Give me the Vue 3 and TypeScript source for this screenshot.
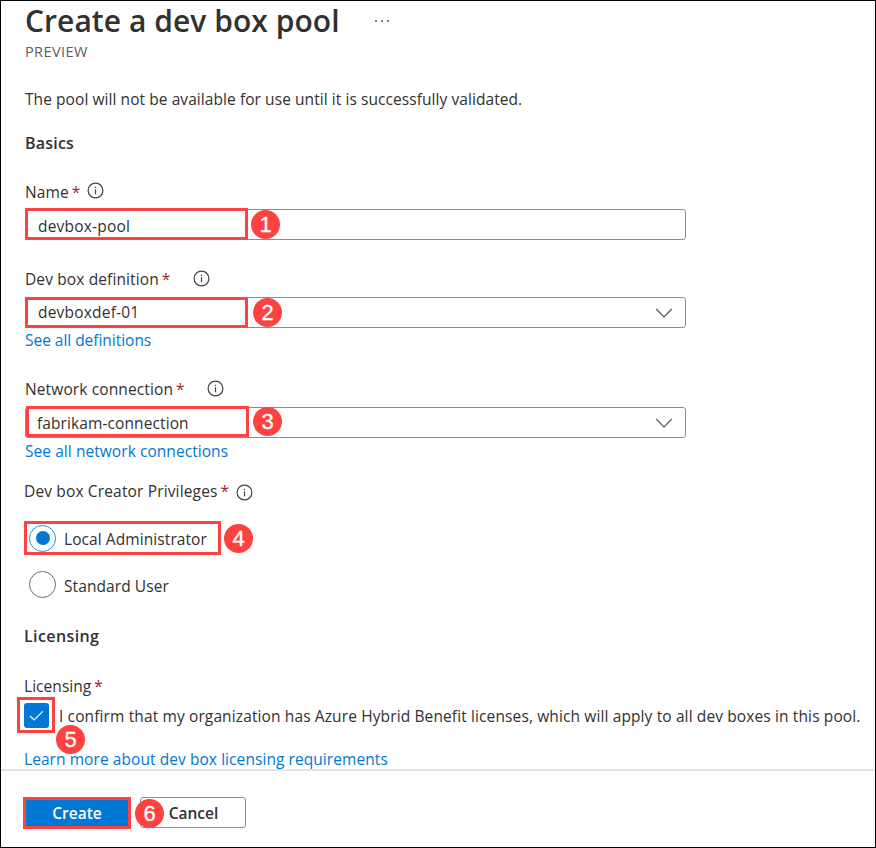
<script setup lang="ts">
import { ref } from 'vue'

const name = ref('devbox-pool')
const definition = ref('devboxdef-01')
const connection = ref('fabrikam-connection')
const privilege = ref<'local' | 'standard'>('local')
const confirmed = ref(true)
</script>

<template>
  <main class="page">
    <section class="content">
      <header class="title-row">
        <h1>Create a dev box pool</h1>
        <svg class="more" viewBox="0 0 16 4" width="16" height="4"><g fill="#555"><circle cx="2" cy="2" r="1" /><circle cx="8" cy="2" r="1" /><circle cx="14" cy="2" r="1" /></g></svg>
      </header>
      <p class="preview"><span>PREVIEW</span></p>
      <p class="line desc"><span>The pool will not be available for use until it is successfully validated.</span></p>
      <h2 class="line basics"><span>Basics</span></h2>

      <div class="line label l-name">
        <span class="t">Name</span><span class="star">*</span>
        <svg class="info" viewBox="0 0 17 17"><circle cx="8.5" cy="8.5" r="7.4" /><path d="M8.5 7.3V12.3M8.5 4.7V6" /></svg>
      </div>
      <div class="field f-name">
        <span class="value">{{ name }}</span>
        <i class="mark"></i><b class="badge">1</b>
      </div>

      <div class="line label l-def">
        <span class="t">Dev box definition</span><span class="star">*</span>
        <svg class="info" viewBox="0 0 17 17"><circle cx="8.5" cy="8.5" r="7.4" /><path d="M8.5 7.3V12.3M8.5 4.7V6" /></svg>
      </div>
      <div class="field f-def">
        <span class="value">{{ definition }}</span>
        <svg class="chevron" viewBox="0 0 18 10"><path d="M1.2 1L9 8.8L16.8 1" /></svg>
        <i class="mark"></i><b class="badge">2</b>
      </div>
      <a class="line link k-def"><span>See all definitions</span></a>

      <div class="line label l-net">
        <span class="t">Network connection</span><span class="star">*</span>
        <svg class="info" viewBox="0 0 17 17"><circle cx="8.5" cy="8.5" r="7.4" /><path d="M8.5 7.3V12.3M8.5 4.7V6" /></svg>
      </div>
      <div class="field f-net">
        <span class="value">{{ connection }}</span>
        <svg class="chevron" viewBox="0 0 18 10"><path d="M1.2 1L9 8.8L16.8 1" /></svg>
        <i class="mark"></i><b class="badge">3</b>
      </div>
      <a class="line link k-net"><span>See all network connections</span></a>

      <div class="line label l-priv">
        <span class="t">Dev box Creator Privileges</span><span class="star">*</span>
        <svg class="info" viewBox="0 0 17 17"><circle cx="8.5" cy="8.5" r="7.4" /><path d="M8.5 7.3V12.3M8.5 4.7V6" /></svg>
      </div>
      <div class="option o-local" @click="privilege = 'local'">
        <span class="radio" :class="{ on: privilege === 'local' }"></span>
        <span class="option-text">Local Administrator</span>
        <i class="mark"></i><b class="badge">4</b>
      </div>
      <div class="option o-standard" @click="privilege = 'standard'">
        <span class="radio" :class="{ on: privilege === 'standard' }"></span>
        <span class="option-text">Standard User</span>
      </div>

      <h2 class="line licensing"><span>Licensing</span></h2>
      <div class="line label l-lic"><span class="t">Licensing</span><span class="star">*</span></div>
      <div class="confirm" @click="confirmed = !confirmed">
        <span class="check"><svg v-if="confirmed" viewBox="0 0 25 25"><path d="M6 13L10.2 17L18.8 8.4" /></svg></span>
        <span class="confirm-text">I confirm that my organization has Azure Hybrid Benefit licenses, which will apply to all dev boxes in this pool.</span>
        <i class="mark"></i><b class="badge">5</b>
      </div>
      <a class="line link k-learn"><span>Learn more about dev box licensing requirements</span></a>
    </section>

    <footer class="footer">
      <button class="create"><span>Create</span></button>
      <button class="cancel"><span>Cancel</span></button>
      <b class="badge">6</b>
    </footer>
  </main>
</template>

<style>
body { margin: 0; background: #fff; }
</style>

<style scoped>
.page {
  box-sizing: border-box;
  width: 876px;
  height: 848px;
  border: 1px solid #000;
  background: #fff;
  color: #323130;
  font-family: "Open Sans", "Noto Sans", sans-serif;
  font-size: 15.5px;
  letter-spacing: 0.12px;
  overflow: hidden;
}
.content { height: 768px; padding-left: 24px; box-sizing: border-box; }
h1, h2, p { margin: 0; }
.title-row { display: flex; align-items: center; height: 37px; }
h1 { font-size: 30px; font-weight: 600; line-height: 39px; padding-top: 1px; letter-spacing: 0.05px; white-space: nowrap; }
.more { margin-left: 34px; margin-top: 2px; }
.preview { margin-top: 4px; font-size: 14.5px; line-height: 20px; height: 20px; letter-spacing: 0.4px; color: #605e5c; }
.line { display: flex; height: 22px; line-height: 22px; white-space: nowrap; }
h2 { font-size: 16px; font-weight: 600; }
.desc { margin-top: 26px; letter-spacing: 0.07px; }
.basics { margin-top: 22px; letter-spacing: 0.2px; }
.label { align-items: center; }
.star { margin-left: 3px; color: #a4262c; }
.info { width: 17px; height: 17px; fill: none; stroke: #444; stroke-width: 1.2; }
.l-name { margin-top: 27px; }
.l-name .info { margin: -3px 0 0 6px; }
.l-def { margin-top: 28px; }
.l-def .info { margin: -2px 0 0 22px; }
.l-net { margin-top: 27px; }
.l-net .info { margin: -1px 0 0 22px; }
.l-priv { margin: 18px 0 0 -1px; }
.l-priv .t { letter-spacing: 0.15px; }
.l-priv .info { margin: 3px 0 0 7px; }

.field {
  position: relative;
  display: flex;
  align-items: center;
  justify-content: space-between;
  box-sizing: border-box;
  width: 661px;
  height: 31px;
  padding: 0 12px;
  border: 1px solid #8f8d8b;
  border-radius: 3px;
  white-space: nowrap;
}
.value { line-height: 29px; letter-spacing: 0.2px; }
.f-name { margin-top: 6px; }
.f-name .value { padding-top: 3px; }
.f-def, .f-net { margin-top: 7px; }
.f-net .value { margin-left: -1px; padding-top: 2px; letter-spacing: 0.1px; }
.chevron { width: 18px; height: 10px; fill: none; stroke: #555; stroke-width: 1.2; }
.link { color: #0078d4; }
.k-def { margin-top: 1px; letter-spacing: -0.03px; }
.k-net { margin-top: 2px; letter-spacing: 0.06px; }

.mark { position: absolute; box-sizing: border-box; border: 3px solid #fe4141; }
.badge {
  position: absolute;
  width: 29px;
  height: 29px;
  border-radius: 50%;
  background: #fe4141;
  color: #fff;
  font: 400 22px/29px "Liberation Sans", Arial, sans-serif;
  letter-spacing: 0;
  text-align: center;
  -webkit-text-stroke: 0.3px #fff;
}
.f-name .mark { left: -1px; top: -2px; width: 223px; height: 32px; }
.f-name .badge { left: 225px; top: 0; }
.f-def .mark { left: -1px; top: -1px; width: 223px; height: 31px; }
.f-def .badge { left: 227px; top: 0; }
.f-net .mark { left: 0; top: -2px; width: 223px; height: 31px; }
.f-net .badge { left: 227px; top: -1px; }

.option { position: relative; display: flex; align-items: center; margin-left: -1px; white-space: nowrap; }
.o-local { height: 34px; margin-top: 19px; width: 197px; }
.o-standard { height: 28px; margin-top: 15px; }
.radio { position: relative; box-sizing: border-box; width: 27px; height: 27px; margin-left: 5px; border: 1.5px solid #6b6b6b; border-radius: 50%; }
.radio.on { border-color: #2b8ddd; }
.radio.on::after { content: ""; position: absolute; inset: 5.5px; border-radius: 50%; background: #0078d4; }
.option-text { margin: 2px 0 0 8px; letter-spacing: 0.08px; }
.o-standard .option-text { margin-top: 4px; }
.o-local .mark { inset: 0; }
.o-local .badge { left: 200px; top: 3px; }

.licensing { margin: 27px 0 0 -1px; letter-spacing: 0.4px; }
.l-lic { margin: 28px 0 0 -1px; letter-spacing: 0.05px; }
.confirm { position: relative; display: flex; align-items: center; height: 36px; margin-left: -1px; white-space: nowrap; }
.check { width: 25px; height: 25px; border-radius: 3px; background: #0078d4; }
.check svg { display: block; width: 25px; height: 25px; fill: none; stroke: #fff; stroke-width: 1.2; }
.confirm-text { margin: 2px 0 0 10px; letter-spacing: 0.12px; }
.confirm .mark { left: -7px; top: 0; width: 38px; height: 36px; }
.confirm .badge { left: 32px; top: 28px; }
.k-learn { height: 21px; line-height: 22px; margin: 15px 0 0 -1px; letter-spacing: 0.07px; }

.footer { position: relative; display: flex; gap: 9px; padding: 26px 0 0 22px; border-top: 2px solid #e3e3e3; }
button { box-sizing: border-box; padding: 0; font: 600 15.5px/26px "Open Sans", "Noto Sans", sans-serif; }
.create { width: 108px; height: 32px; border: 3px solid #fe4141; background: #0078d4; color: #fff; }
.cancel { width: 106px; height: 31px; padding-left: 1px; border: 1px solid #8f8d8b; border-radius: 3px; background: #fff; color: #323130; }
.footer .badge { left: 134px; top: 28px; }
</style>
